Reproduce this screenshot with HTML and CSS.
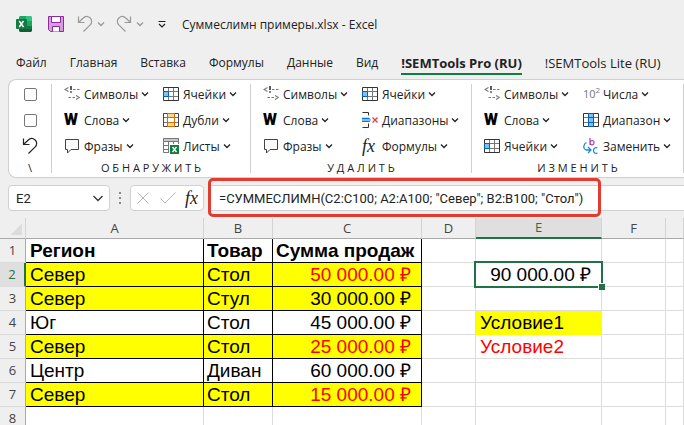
FILE: index.html
```html
<!DOCTYPE html>
<html lang="ru">
<head>
  <meta charset="UTF-8">
  <meta name="viewport" content="width=device-width, initial-scale=1">
  <title>Суммеслимн примеры.xlsx - Excel</title>
  <link rel="stylesheet" href="styles.css">
</head>
<body>

<!-- Icons -->
<svg class="sprite" aria-hidden="true">
  <symbol id="chevron" viewBox="0 0 8 8">
    <path d="m1 2.500 3 3 3-3" fill="none" stroke="currentColor" stroke-width="1.300"/>
  </symbol>
  <symbol id="undo" viewBox="0 0 16 18">
    <path d="M1.500 1.500v6h6M1.800 7.200 6 3.200c2.300-2.200 5-2 6.900-.4 2.300 2 2.300 5 .3 7.100L6.500 16.500" fill="none" stroke="currentColor" stroke-width="1.200"/>
  </symbol>
  <symbol id="symbols" viewBox="0 0 16 16">
    <path d="M4.500 1.500 1 3.500l3.500 2M9 3.500h2.500M13 3.500h2.500M4.500 11.500h2.500M8.500 11.500H11M12 9.500l3.500 2-3.500 2" fill="none" stroke="#777" stroke-width="1.100"/>
    <path d="M7 0v4M7 5.200v1.500" stroke="#333" stroke-width="1.600"/>
  </symbol>
  <symbol id="cells" viewBox="0 0 16 16">
    <path d="M.5 1.500h15v13H.5z" fill="#fff"/>
    <path d="M5.500 2v12M10.500 2v12M1 5.500h14M1 10.500h14" stroke="#777"/>
    <path d="M.5 1.500h15v13H.5z" fill="none" stroke="#333"/>
    <path d="M.5 5.500h5v5h-5z" fill="#83beec" stroke="#0063b1"/>
  </symbol>
  <symbol id="dubli" viewBox="0 0 16 16">
    <path d="M.5 1.500h15v13H.5z" fill="#fff" stroke="#444"/>
    <path d="M1 5.500h14M1 10.500h14" stroke="#777"/>
    <path d="M4.500 1.500h7v4h-7zM4.500 10.500h7v4h-7z" fill="#f8db8f" stroke="#d86b00"/>
    <path d="M4.500 5v6M11.500 5v6" stroke="#d86b00"/>
  </symbol>
  <symbol id="sheets" viewBox="0 0 16 16">
    <path d="M.5.5h15v3H.5z" fill="#c8c8c8" stroke="#777"/>
    <path d="M.5 3.500v11H6M5.500 4v10M10.500 4v2M15.500 3v3M1 7.500h5M1 11.500h5" fill="none" stroke="#777"/>
    <path d="M7 7h9v9H7z" fill="#107c41"/>
    <path d="m9.500 9 4 5M13.500 9l-4 5" stroke="#fff" stroke-width="1.300"/>
  </symbol>
  <symbol id="phrase" viewBox="0 0 16 16">
    <path d="M1.500 1.500h13v10H7l-3.500 3.500v-3.500h-2z" fill="#fafafa" stroke="#444"/>
  </symbol>
  <symbol id="ranges" viewBox="0 0 16 16">
    <path d="M.5.5h6v3M.5 15.500h6v-4" fill="none" stroke="#333"/>
    <path d="M0 5.500h7L9.500 8 7 10H0z" fill="#83beec"/>
    <path d="M0 6.500h7.500M0 9.500h7.500" stroke="#0078d4"/>
    <path d="m10.500 5.500 5 5M15.500 5.500l-5 5" stroke="#e33b3b" stroke-width="1.200"/>
  </symbol>
  <symbol id="range" viewBox="0 0 16 16">
    <path d="M.5 1.500h15v13H.5z" fill="#fff"/>
    <path d="M1 5.500h14M1 10.500h14" stroke="#777"/>
    <path d="M.5 1.500h15v13H.5z" fill="none" stroke="#333"/>
    <path d="M5.500 1.500h5v13h-5z" fill="#83beec" stroke="#0063b1"/>
    <path d="M6 5.500h4M6 10.500h4" stroke="#0063b1"/>
  </symbol>
  <symbol id="replace" viewBox="0 0 16 16">
    <path d="M7 0v7M7 4.500C7.500 2 11 2 11 4.700S7.500 7.500 7 5" fill="none" stroke="#b146c2" stroke-width="1.300"/>
    <path d="M14.500 10c-2-1-4 .2-4 2.500s2 3.500 4 2.500" fill="none" stroke="#1e8bcd" stroke-width="1.300"/>
    <path d="M3.500 4.500C.5 6-.5 11 3 12h4.500M5 9l3 3-3 3" fill="none" stroke="#1e8bcd" stroke-width="1.300"/>
  </symbol>
</svg>

<header class="titlebar">
  <svg class="excel-logo" viewBox="0 0 16 16" role="img" aria-label="Excel">
    <path d="M4 0h6v5H3V1z" fill="#21a366"/>
    <path d="M10 0h5l1 1v4h-6z" fill="#33c481"/>
    <path d="M3 5h7v5H3z" fill="#107c41"/>
    <path d="M10 5h6v5h-6z" fill="#21a366"/>
    <path d="M3 10h13v5l-1 1H4l-1-1z" fill="#185c37"/>
    <path d="M10 10h6v3h-6z" fill="#107c41"/>
    <rect y="3" width="11" height="10" rx="1" fill="#107c41"/>
    <path d="m3.200 5 4.300 6M7.500 5l-4.300 6" stroke="#fff" stroke-width="1.500"/>
  </svg>
  <button class="quick save" aria-label="Сохранить">
    <svg viewBox="0 0 16 16"><path d="M.5.5h15v15h-13l-2-2z" fill="#d99be0" stroke="#8a2a9b"/><path d="M3.500.500h9v6h-9zM4.500 15.500v-5h7v5" fill="#fff" stroke="#8a2a9b"/></svg>
  </button>
  <button class="quick undo" aria-label="Отменить">
    <svg class="arrow"><use href="#undo"/></svg><svg class="chev"><use href="#chevron"/></svg>
  </button>
  <button class="quick redo" aria-label="Вернуть">
    <svg class="arrow"><use href="#undo"/></svg><svg class="chev"><use href="#chevron"/></svg>
  </button>
  <button class="quick customize" aria-label="Настройка панели">
    <svg viewBox="0 0 8 8"><path d="M.5 1.500h7M1 4l3 3 3-3" fill="none" stroke="#222" stroke-width="1.200"/></svg>
  </button>
  <h1>Суммеслимн примеры.xlsx - Excel</h1>
</header>

<nav class="tabs">
  <a href="#">Файл</a>
  <a href="#">Главная</a>
  <a href="#">Вставка</a>
  <a href="#">Формулы</a>
  <a href="#">Данные</a>
  <a href="#">Вид</a>
  <a href="#" class="addin active">!SEMTools Pro (RU)</a>
  <a href="#" class="addin">!SEMTools Lite (RU)</a>
</nav>

<section class="ribbon">
  <div class="group options">
    <input type="checkbox" aria-label="Параметр 1">
    <input type="checkbox" aria-label="Параметр 2">
    <button aria-label="Отменить действие"><svg class="undo-icon"><use href="#undo"/></svg></button>
    <div class="caption">\</div>
  </div>

  <div class="group detect">
    <div class="commands">
      <button><svg class="icon"><use href="#symbols"/></svg>Символы<svg class="chev"><use href="#chevron"/></svg></button>
      <button><svg class="icon"><use href="#cells"/></svg>Ячейки<svg class="chev"><use href="#chevron"/></svg></button>
      <button><b class="icon">W</b>Слова<svg class="chev"><use href="#chevron"/></svg></button>
      <button><svg class="icon"><use href="#dubli"/></svg>Дубли<svg class="chev"><use href="#chevron"/></svg></button>
      <button><svg class="icon"><use href="#phrase"/></svg>Фразы<svg class="chev"><use href="#chevron"/></svg></button>
      <button><svg class="icon"><use href="#sheets"/></svg>Листы<svg class="chev"><use href="#chevron"/></svg></button>
    </div>
    <div class="caption">О Б Н А Р У Ж И Т Ь</div>
  </div>

  <div class="group remove">
    <div class="commands">
      <button><svg class="icon"><use href="#symbols"/></svg>Символы<svg class="chev"><use href="#chevron"/></svg></button>
      <button><svg class="icon"><use href="#cells"/></svg>Ячейки<svg class="chev"><use href="#chevron"/></svg></button>
      <button><b class="icon">W</b>Слова<svg class="chev"><use href="#chevron"/></svg></button>
      <button><svg class="icon"><use href="#ranges"/></svg>Диапазоны<svg class="chev"><use href="#chevron"/></svg></button>
      <button><svg class="icon"><use href="#phrase"/></svg>Фразы<svg class="chev"><use href="#chevron"/></svg></button>
      <button><i class="icon fx">fx</i>Формулы<svg class="chev"><use href="#chevron"/></svg></button>
    </div>
    <div class="caption">У Д А Л И Т Ь</div>
  </div>

  <div class="group change">
    <div class="commands">
      <button><svg class="icon"><use href="#symbols"/></svg>Символы<svg class="chev"><use href="#chevron"/></svg></button>
      <button><span class="icon power">10<sup>2</sup></span>Числа<svg class="chev"><use href="#chevron"/></svg></button>
      <button><b class="icon">W</b>Слова<svg class="chev"><use href="#chevron"/></svg></button>
      <button><svg class="icon"><use href="#range"/></svg>Диапазон<svg class="chev"><use href="#chevron"/></svg></button>
      <button><svg class="icon"><use href="#cells"/></svg>Ячейки<svg class="chev"><use href="#chevron"/></svg></button>
      <button><svg class="icon"><use href="#replace"/></svg>Заменить<svg class="chev"><use href="#chevron"/></svg></button>
    </div>
    <div class="caption">И З М Е Н И Т Ь</div>
  </div>
</section>

<section class="formula-bar">
  <div class="name-box">
    <select aria-label="Имя ячейки"><option>E2</option></select>
    <svg viewBox="0 0 12 12"><path d="m1.500 4 4.500 4.500L10.500 4" fill="none" stroke="#333" stroke-width="1.300"/></svg>
  </div>
  <div class="dots"><i></i><i></i><i></i></div>
  <div class="fx-box">
    <button aria-label="Отмена"><svg viewBox="0 0 14 14"><path d="m1.500 1.500 11 11M12.500 1.500l-11 11" stroke="#b5b5b5"/></svg></button>
    <button aria-label="Ввод"><svg class="check" viewBox="0 0 16 14"><path d="m.5 7.500 4.500 4.500L15.500 1.500" fill="none" stroke="#b5b5b5"/></svg></button>
    <button class="fx" aria-label="Вставить функцию">fx</button>
  </div>
  <div class="formula">
    <input type="text" aria-label="Строка формул" value='=СУММЕСЛИМН(C2:C100; A2:A100; "Север"; B2:B100; "Стол")'>
    <div class="highlight"></div>
  </div>
</section>

<table class="sheet">
  <colgroup>
    <col class="col-num"><col class="col-a"><col class="col-b"><col class="col-c"><col class="col-d"><col class="col-e"><col class="col-f"><col>
  </colgroup>
  <thead>
    <tr><th class="corner"></th><th>A</th><th>B</th><th>C</th><th>D</th><th class="selected">E</th><th>F</th><th></th></tr>
  </thead>
  <tbody>
    <tr class="data head"><th>1</th><td>Регион</td><td>Товар</td><td>Сумма продаж</td><td></td><td></td><td></td><td></td></tr>
    <tr class="data yellow red"><th class="selected">2</th><td>Север</td><td>Стол</td><td>50 000.00 ₽</td><td></td><td class="result">90 000.00 ₽</td><td></td><td></td></tr>
    <tr class="data yellow"><th>3</th><td>Север</td><td>Стул</td><td>30 000.00 ₽</td><td></td><td></td><td></td><td></td></tr>
    <tr class="data"><th>4</th><td>Юг</td><td>Стол</td><td>45 000.00 ₽</td><td></td><td class="cond1">Условие1</td><td></td><td></td></tr>
    <tr class="data yellow red"><th>5</th><td>Север</td><td>Стол</td><td>25 000.00 ₽</td><td></td><td class="cond2">Условие2</td><td></td><td></td></tr>
    <tr class="data"><th>6</th><td>Центр</td><td>Диван</td><td>60 000.00 ₽</td><td></td><td></td><td></td><td></td></tr>
    <tr class="data yellow red"><th>7</th><td>Север</td><td>Стол</td><td>15 000.00 ₽</td><td></td><td></td><td></td><td></td></tr>
    <tr><th>8</th><td></td><td></td><td></td><td></td><td></td><td></td><td></td></tr>
  </tbody>
</table>

</body>
</html>
```
FILE: styles.css
```css
* {
  box-sizing: border-box;
}
html {
  height: 100%;
  overflow: hidden;
}
body {
  margin: 0;
  height: 100%;
  overflow: hidden;
  background: #efefef;
  color: #222;
  font-family: "Open Sans", "Noto Sans", sans-serif;
  font-size: 12px;
}
button {
  display: flex;
  align-items: center;
  padding: 0;
  border: 0;
  background: none;
  color: inherit;
  font: inherit;
}
.sprite {
  display: none;
}
.chev {
  width: 8px;
  height: 8px;
}

/* Title bar */
.titlebar {
  display: flex;
  align-items: center;
  height: 48px;
  padding-left: 16px;
}
.titlebar h1 {
  margin: 0;
  font-size: 12px;
  font-weight: normal;
  white-space: nowrap;
}
.excel-logo,
.save svg {
  width: 16px;
  height: 16px;
}
.save {
  margin: 0 13px 0 16px;
}
.quick {
  color: #999;
}
.quick .arrow {
  width: 16px;
  height: 18px;
}
.quick .chev {
  margin-left: 4px;
}
.redo {
  margin-left: 11px;
}
.redo .arrow {
  transform: scaleX(-1);
}
.customize {
  margin: 0 16px 0 14px;
}
.customize svg {
  width: 8px;
  height: 8px;
}

/* Tabs */
.tabs {
  display: flex;
  gap: 23px;
  height: 31px;
  padding: 4px 0 0 16px;
  line-height: 22px;
}
.tabs a {
  height: 23px;
  color: #222;
  text-decoration: none;
  white-space: nowrap;
}
.tabs .addin {
  font-size: 13px;
}
.tabs .active {
  border-bottom: 2px solid #107c41;
  font-weight: bold;
}

/* Ribbon */
.ribbon {
  display: flex;
  height: 99px;
  margin-left: 8px;
  padding: 4px 0;
  border: 1px solid #cfcfcf;
  border-right: 0;
  border-radius: 8px 0 0 8px;
  background: #fff;
  overflow: hidden;
}
.group {
  flex-shrink: 0;
  border-right: 1px solid #cfcfcf;
}
.options {
  display: grid;
  grid-template-rows: repeat(3, 20px) 12px;
  row-gap: 6px;
  place-items: center;
  width: 43px;
}
.options input {
  appearance: none;
  width: 13px;
  height: 13px;
  margin: 0;
  border: 1px solid #777;
  border-radius: 2px;
  background: #fff;
}
.undo-icon {
  width: 16px;
  height: 18px;
}
.detect {
  width: 199px;
}
.remove {
  width: 221px;
}
.change {
  width: 212px;
}
.commands {
  display: grid;
  grid-template-columns: 99px 1fr;
  grid-auto-rows: 20px;
  row-gap: 6px;
  margin-bottom: 6px;
  padding-left: 12px;
}
.commands button {
  white-space: nowrap;
}
.commands .icon {
  flex-shrink: 0;
  width: 16px;
  height: 16px;
  margin-right: 4px;
  line-height: 16px;
  text-align: left;
}
.commands b {
  color: #000;
  font-family: Roboto, sans-serif;
  font-size: 16px;
  font-weight: 900;
}
.commands .chev {
  margin-left: 3px;
}
.fx {
  font-family: "Liberation Serif", serif;
  font-size: 18px;
  font-style: italic;
}
.power {
  color: #777;
}
.commands .power {
  font-size: 11px;
}
.power sup {
  font-size: 8px;
  line-height: 8px;
}
.caption {
  height: 12px;
  font-size: 11px;
  line-height: 12px;
  text-align: center;
}

/* Formula bar */
.formula-bar {
  display: flex;
  align-items: center;
  height: 40px;
  padding-left: 8px;
}
.name-box,
.fx-box {
  height: 26px;
  border: 1px solid #d0d0d0;
  border-radius: 4px;
  background: #fff;
}
.name-box {
  display: flex;
  align-items: center;
  width: 102px;
  padding: 0 5px 0 7px;
}
.name-box select,
.formula input {
  border: 0;
  color: #222;
  font-family: Roboto, "Open Sans", sans-serif;
  font-size: 13px;
}
.name-box select {
  appearance: none;
  flex: 1;
  min-width: 0;
  padding: 0;
  background: none;
}
.name-box svg {
  width: 12px;
  height: 12px;
}
.dots {
  display: grid;
  gap: 3px;
  margin: 0 9px;
}
.dots i {
  width: 2px;
  height: 2px;
  background: #888;
}
.fx-box {
  display: flex;
  align-items: center;
  justify-content: space-between;
  width: 74px;
  padding: 0 5px;
}
.fx-box svg {
  width: 14px;
  height: 14px;
}
.fx-box .check {
  width: 16px;
}
.formula {
  position: relative;
  flex: 1;
  margin-left: 4px;
}
.formula input {
  display: block;
  width: 100%;
  height: 26px;
  padding: 0 11px;
  border: solid #d0d0d0;
  border-width: 1px 0;
  background: #fff;
}
.highlight {
  position: absolute;
  top: -7px;
  left: 0;
  width: 393px;
  height: 39px;
  border: 3px solid #e23b30;
  border-radius: 5px;
}

/* Sheet */
.sheet {
  width: 100%;
  table-layout: fixed;
  border-spacing: 0;
  font-family: "Liberation Sans", Arial, sans-serif;
  font-size: 19px;
  line-height: 23px;
  color: #000;
}
.col-num { width: 26px; }
.col-a { width: 178px; }
.col-b { width: 69px; }
.col-c { width: 149px; }
.col-d { width: 54px; }
.col-e { width: 126px; }
.col-f { width: 64px; }

.sheet th {
  padding: 0;
  border-right: 1px solid #aaa;
  background: #efefef;
  color: #444;
  font-family: "Open Sans", "Noto Sans", sans-serif;
  font-size: 13px;
  font-weight: normal;
  text-align: center;
}
.sheet thead th {
  height: 21px;
  line-height: 20px;
  border-right: 1px solid #d4d4d4;
  border-bottom: 1px solid #aaa;
}
.sheet tbody th {
  border-bottom: 1px solid #dcdcdc;
}
.sheet thead .corner {
  background: linear-gradient(135deg, transparent 50%, #dcdcdc 50%) 10px 5px / 12px 12px no-repeat #efefef;
}
.sheet .selected {
  background: #dfdfdf;
  color: #217346;
}
.sheet thead .selected {
  border-bottom: 2px solid #217346;
  line-height: 19px;
}
.sheet tbody .selected {
  border-right: 2px solid #217346;
}
.sheet td {
  height: 24px;
  padding: 0 4px;
  border-right: 1px solid #dcdcdc;
  border-bottom: 1px solid #dcdcdc;
  background: #fff;
  white-space: nowrap;
}
.data td:nth-child(-n+4) {
  border-color: #000;
}
.data td:nth-child(3),
.data td:nth-child(4) {
  padding-left: 3px;
}
.data:not(.head) td:nth-child(4) {
  padding-right: 10px;
  text-align: right;
}
.head td {
  font-weight: bold;
}
.yellow td:nth-child(-n+4),
.sheet .cond1 {
  background: #ff0;
}
.sheet .cond1 {
  border-color: #ff0;
}
.red td:nth-child(4),
.cond2 {
  color: #f00;
}
.sheet .result {
  position: relative;
  padding-right: 10px;
  text-align: right;
}
/* selection frame and its fill handle */
.result::before {
  content: "";
  position: absolute;
  inset: -2px;
  border: 2px solid #217346;
}
.result::after {
  content: "";
  position: absolute;
  right: -4px;
  bottom: -4px;
  width: 6px;
  height: 6px;
  border: solid #fff;
  border-width: 1px 0 0 1px;
  background: #217346;
}
```
